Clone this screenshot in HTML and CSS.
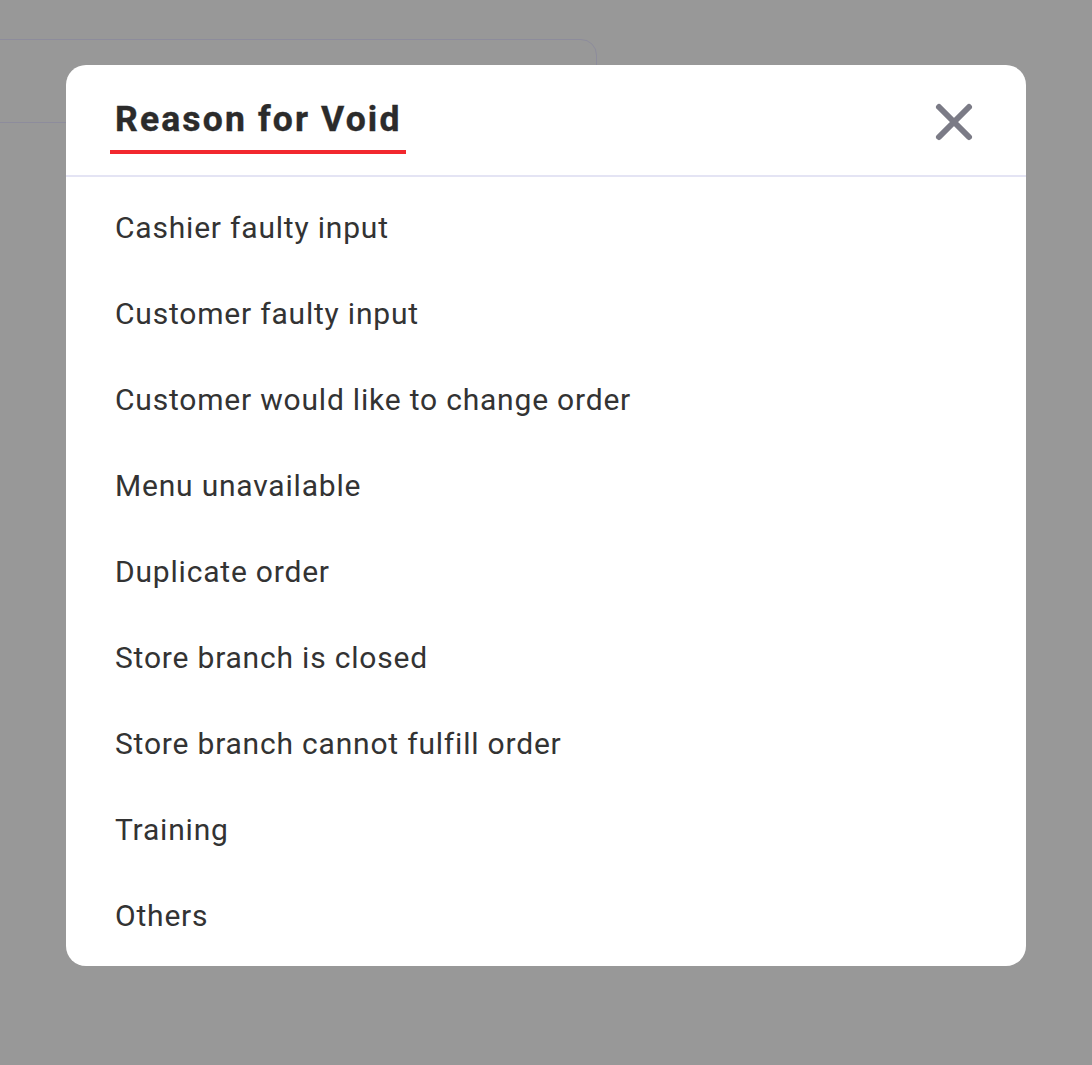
FILE: index.html
```html
<!DOCTYPE html>
<html>
<head>
<meta charset="utf-8">
<link rel="stylesheet" href="styles.css">
</head>
<body>
<div class="screen">
  <div class="bg-card"></div>
  <div class="modal">
    <div class="modal-header">
      <h1 class="modal-title">Reason for Void</h1>
      <button class="close-btn" aria-label="Close">
        <svg width="40" height="40" viewBox="0 0 40 40"><path d="M5 5 L35 35 M35 5 L5 35" stroke="#7b7b86" stroke-width="6" stroke-linecap="round" fill="none"/></svg>
      </button>
    </div>
    <ul class="reason-list">
      <li class="reason">Cashier faulty input</li>
      <li class="reason">Customer faulty input</li>
      <li class="reason">Customer would like to change order</li>
      <li class="reason">Menu unavailable</li>
      <li class="reason">Duplicate order</li>
      <li class="reason">Store branch is closed</li>
      <li class="reason">Store branch cannot fulfill order</li>
      <li class="reason">Training</li>
      <li class="reason">Others</li>
    </ul>
  </div>
</div>
</body>
</html>
```

FILE: styles.css
```css
* { box-sizing: border-box; }
html, body { margin: 0; padding: 0; }
body {
  background: #989898;
  font-family: Roboto, "Liberation Sans", sans-serif;
  width: 1092px;
  height: 1065px;
  overflow: hidden;
}
.screen {
  position: relative;
  width: 1092px;
  height: 1065px;
}
.bg-card {
  position: absolute;
  left: -20px;
  top: 39px;
  width: 617px;
  height: 84px;
  border: 1.5px solid #8d8c9c;
  border-radius: 0 16px 0 0;
}
.modal {
  position: absolute;
  left: 66px;
  top: 65px;
  width: 960px;
  height: 901px;
  background: #fff;
  border-radius: 20px;
  overflow: hidden;
}
.modal-header {
  height: 112px;
  border-bottom: 2px solid #e4e4f4;
  display: flex;
  align-items: flex-start;
  justify-content: space-between;
  padding: 0 52px 0 44px;
}
.modal-title {
  margin: 30px 0 0 0;
  padding: 0 4px 7px 5px;
  font-size: 35.5px;
  font-weight: 700;
  color: #2b2b2b;
  line-height: 48px;
  border-bottom: 4px solid #f2282e;
  letter-spacing: 2.15px;
  -webkit-text-stroke: 0.4px #2b2b2b;
}
.close-btn {
  margin-top: 37px;
  width: 40px;
  height: 40px;
  padding: 0;
  border: none;
  background: none;
  display: flex;
}
.reason-list {
  list-style: none;
  margin: 0;
  padding: 7px 0 0 0;
}
.reason {
  height: 86px;
  display: flex;
  align-items: center;
  padding-left: 49px;
  font-size: 30px;
  letter-spacing: 0.8px;
  color: #333;
}
```
